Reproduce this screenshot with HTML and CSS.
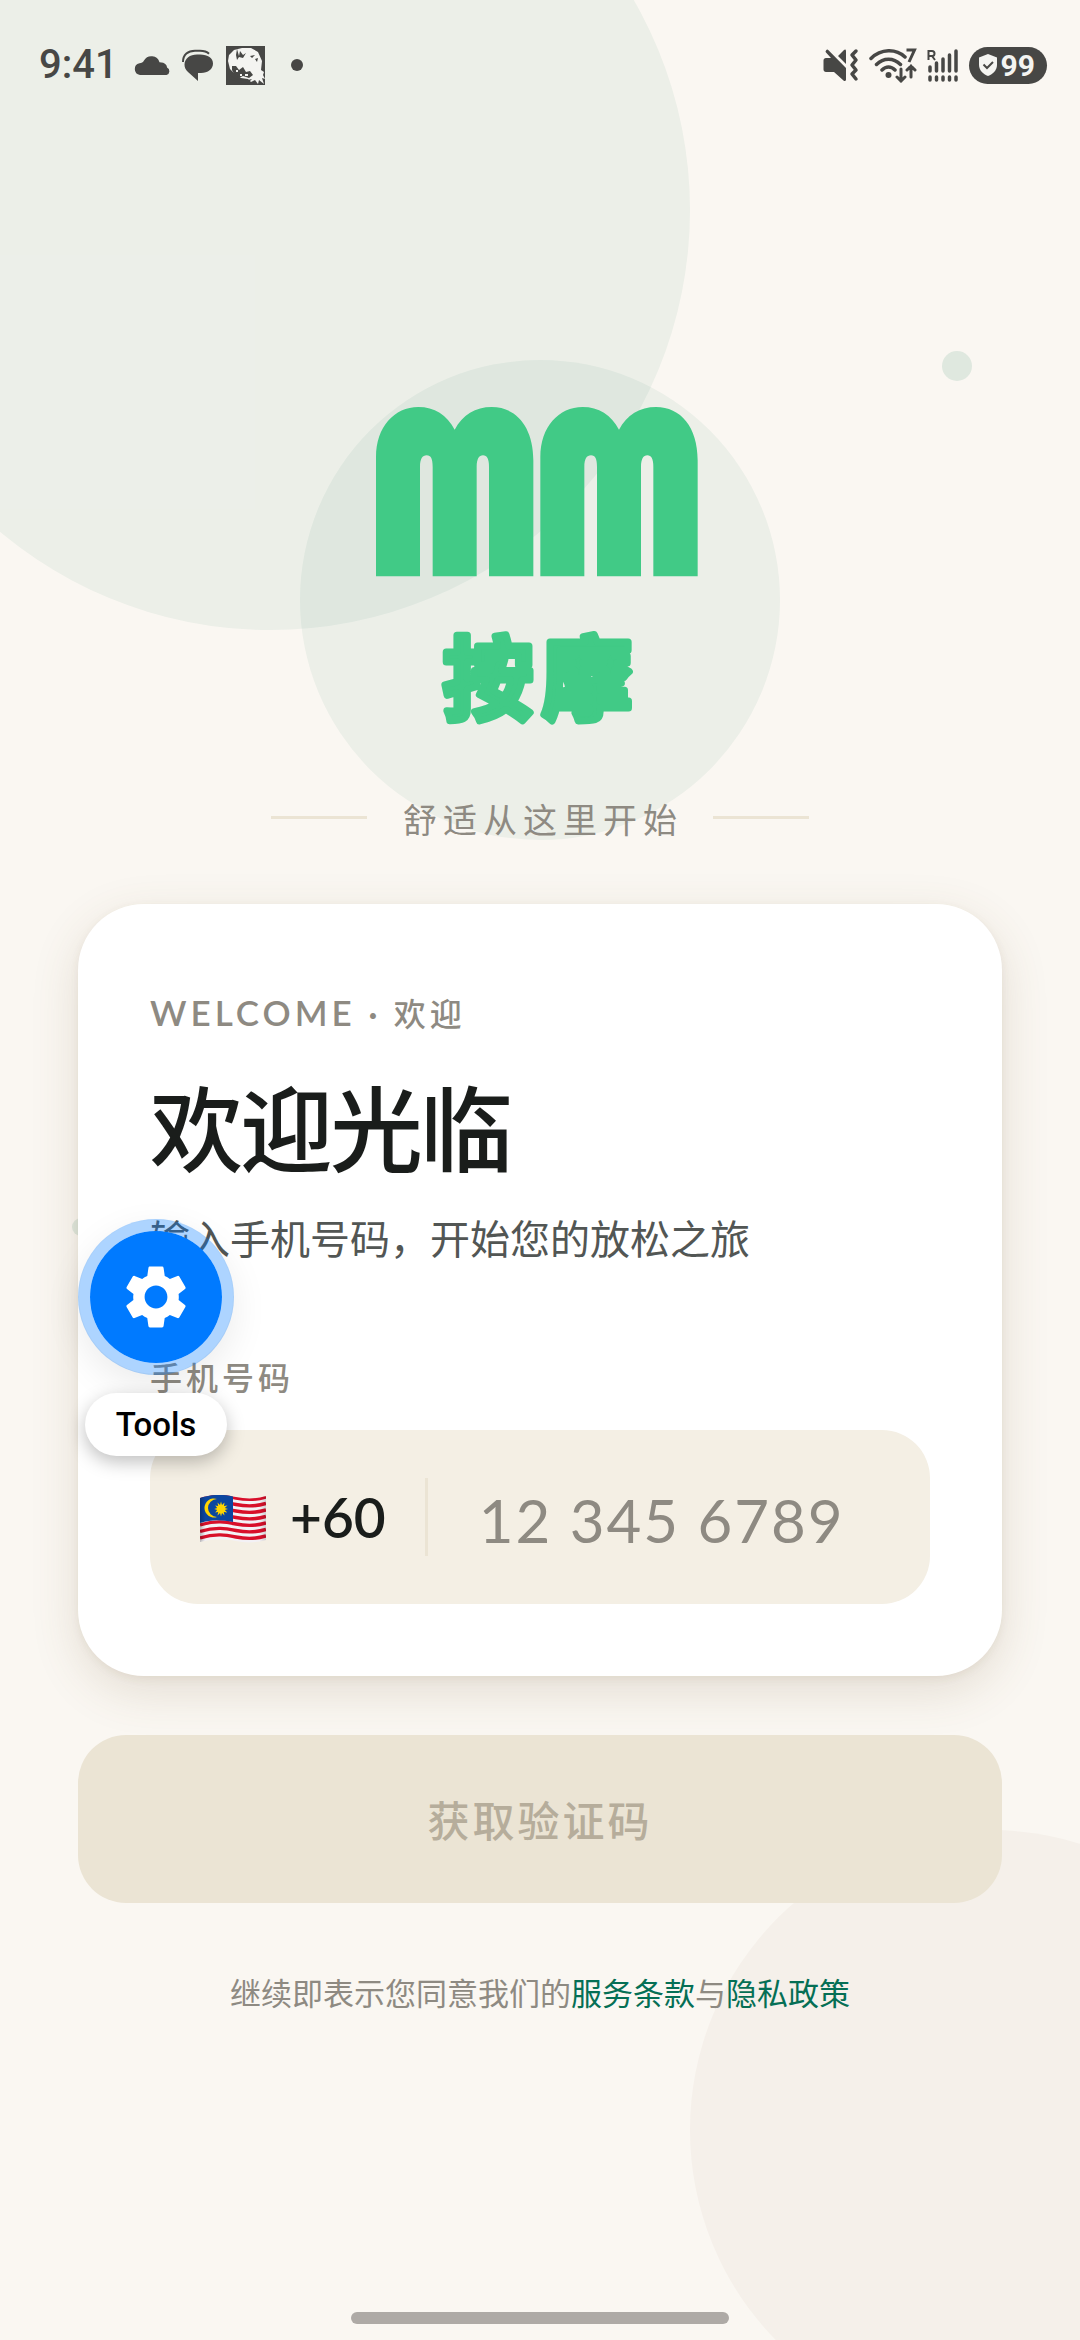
FILE: index.html
```html
<!DOCTYPE html>
<html lang="zh-CN">
<head>
  <meta charset="utf-8">
  <meta name="viewport" content="width=device-width, initial-scale=1">
  <title>MM 按摩</title>
  <link rel="stylesheet" href="styles.css">
</head>
<body>
  <div class="page">
    <div class="backdrop" aria-hidden="true">
      <span class="blob blob-top"></span>
      <span class="blob blob-logo"></span>
      <span class="blob blob-bottom"></span>
      <span class="dot dot-right"></span>
      <span class="dot dot-left"></span>
    </div>

    <header class="status">
      <div class="status-side">
        <span class="clock">9:41</span>
        <svg class="ic-cloud" width="36" height="20" viewBox="0 0 36 20"><path d="M6 20a6 6 0 0 1-.5-11.800C7.500 8 9 7.500 10 5.500a8.500 8.500 0 0 1 15.500 1.800c6 .2 7.500 3.200 7.500 5.200a4 4 0 0 1-.5 7.500z"/></svg>
        <svg class="ic-chat" width="32" height="32" viewBox="0 0 32 32"><path d="M15 5.500h3C26 5.500 31 9 31 14.500S26 24 19 24h-3v8L6 23C3.500 21 2.500 18 2.500 15.500 2.500 9.500 8 5.500 15 5.500z"/><path d="M1 13C1 5.500 6 1.800 13 1.800h5c4 0 7 1 9 3" fill="none" stroke="currentColor" stroke-width="2"/></svg>
        <svg class="ic-photo" width="39" height="39" viewBox="0 0 39 39"><path d="M0 0h39v39H0z"/><path class="light" d="M8 4l8-2 9 0 7 4 4 9-1 9 3 2-1 3 2 4-3-1 2 6-5-4-1 4-3-4-4 2-3-3-7-1-6-4-5-5-2-8 1-6z"/><path d="M7 5l3 4 1-6 2 7 1-5 3 4 3-2-3 5-4-1-2 3-1-5zM24 10l5-1-3 3zM29 13l3-1-1 4zM6 20l4 0 3 4 4-3 3 5 4-1 3 4-4 3-6-2-4 2-5-4-2-4zM2 26c4 8 14 10 24 7l-3 3-10 1-9-4z"/><path class="light" d="M10 24h2v2h-2zM14 28h2v2h-2zM19 28h3v2h-3zM12 20h2v1h-2z"/></svg>
        <svg class="ic-more" width="12" height="12" viewBox="0 0 12 12"><circle cx="6" cy="6" r="6"/></svg>
      </div>
      <div class="status-side status-right">
        <svg class="ic-mute" width="36" height="34" viewBox="0 0 36 34"><path d="M3 10h5L3 4.500a1.700 1.700 0 0 1 2.500-2.300L23 20v11.500c0 1.500-1.500 2-2.500 1L11 24H3c-1.500 0-2.500-1-2.500-2.500v-9C.5 11 1.500 10 3 10zM15 8l6-6c1-1 2-.5 2 1v13z"/><path d="M33 3l-4 4 4 5-4 5 4 5-4 4 4 5" fill="none" stroke="currentColor" stroke-width="3.500" stroke-linecap="round" stroke-linejoin="round"/></svg>
        <svg class="ic-wifi" width="48" height="36" viewBox="0 0 48 36"><g fill="none" stroke="currentColor" stroke-width="3.500" stroke-linecap="round"><path d="M2 11.500C12 1.500 27 1.500 36 10M7.500 17.500c7-7 17-7 24 0M13 23c4-4 9-4 13 0"/><path d="M32 22v12M28 30l4 4 4-4M42 30V19M38 23l4-4 4 4" stroke-width="3"/><path d="M37.500 3h8L40 15" stroke-width="3" stroke-linecap="butt"/></g><circle cx="19.500" cy="28" r="3"/></svg>
        <svg class="ic-signal" width="32" height="34" viewBox="0 0 32 34"><path d="M1.500 12V3h3.500a2.300 2.300 0 0 1 0 5H2M5 8l3 4" fill="none" stroke="currentColor" stroke-width="2"/><path d="M3 19v4M9.500 15v8M16 11v12M22.500 7v16M29 3v20M3 29v3M9.500 29v3M16 29v3M22.500 29v3M29 29v3" fill="none" stroke="currentColor" stroke-width="3.500" stroke-linecap="round"/></svg>
        <span class="battery">
          <svg width="20" height="22" viewBox="0 0 20 22"><path class="light" d="M10 0l9 3.500V11c0 5-4 9-9 11C5 20 1 16 1 11V3.500z"/><path d="M5.500 10.500l3.500 3.500 6-6" fill="none" stroke="currentColor" stroke-width="2"/></svg>
          <span>99</span>
        </span>
      </div>
    </header>

    <main class="content">
      <div class="brand">
        <svg class="mark" width="322" height="170" viewBox="0 0 966 510" role="img" aria-label="MM">
          <g id="arches">
            <path d="M0 508V150C0 60 55 0 127 0c48 0 86 24 109 68C259 24 299 0 347 0c74 0 125 60 125 160v348H339V180c0-24-6-35-18-35s-19 11-19 35v328H170V180c0-24-5-35-18-35s-20 11-20 35v328z"/>
          </g>
          <use href="#arches" x="493"/>
        </svg>
        <h1 class="brand-name">
          <svg width="240" height="160"><text x="122" y="115" text-anchor="middle">按摩</text></svg>
        </h1>
        <p class="tagline"><span>舒适从这里开始</span></p>
      </div>

      <form class="login">
        <section class="card">
          <p class="eyebrow"><span class="latin">WELCOME ·</span> 欢迎</p>
          <h2 class="title">欢迎光临</h2>
          <p class="subtitle">输入手机号码，开始您的放松之旅</p>
          <label class="field-label" for="phone">手机号码</label>
          <div class="field">
            <div class="country">
              <svg width="66" height="48" viewBox="0 0 66 48" role="img" aria-label="马来西亚">
                <defs>
                  <clipPath id="wave"><path d="M0 3C16-2 26 0 36 2s20 2 30-1v44c-11 3-20 3-30 1s-22-3-36 1z"/></clipPath>
                  <linearGradient id="shade"><stop offset="0" stop-opacity=".25"/><stop offset=".08" stop-opacity="0"/><stop offset=".9" stop-opacity="0"/><stop offset="1" stop-opacity=".15"/></linearGradient>
                </defs>
                <g clip-path="url(#wave)">
                  <path fill="#f3f1f5" d="M0-2h66v52H0z"/>
                  <path d="M0 4C16-1 26 1 36 3s20 2 30-1M0 10.500C16 5.500 26 7.500 36 9.500s20 2 30-1M0 17C16 12 26 14 36 16s20 2 30-1M0 23.500c16-5 26-3 36-1s20 2 30-1M0 30c16-5 26-3 36-1s20 2 30-1M0 36.500c16-5 26-3 36-1s20 2 30-1M0 43c16-5 26-3 36-1s20 2 30-1" fill="none" stroke="#d80f2a" stroke-width="3.400"/>
                  <path fill="#0b46a0" d="M0-2h33v29C22 25 12 24 0 28z"/>
                  <path fill="#ffd500" d="M17 4a9.500 9.500 0 1 0 0 18 8.500 8.500 0 1 1 0-18z"/>
                  <path fill="#ffd500" d="M21 6.500l1 3.500 2.500-2.500-.5 3.500 3.500-.5-2.700 2.500 3.200 1-3.200 1 2.500 2.500-3.500-.5.700 3.500-2.500-2.500-1 3.500-1-3.500-2.500 2.500.7-3.500-3 .5 2-2.500-3-1 3-1-2-2.500 3 .5-.7-3.500 2.500 2.500z"/>
                  <path fill="url(#shade)" d="M0-2h66v52H0z"/>
                </g>
              </svg>
              <span class="code">+60</span>
            </div>
            <input class="phone" id="phone" type="tel" placeholder="12 345 6789">
          </div>
        </section>
        <button class="submit" type="submit" disabled>获取验证码</button>
      </form>

      <p class="terms">继续即表示您同意我们的<a href="#terms">服务条款</a>与<a href="#privacy">隐私政策</a></p>
    </main>

    <div class="tools">
      <button class="tools-button" type="button" aria-labelledby="tools-label">
        <svg width="76" height="76" viewBox="0 0 24 24"><path d="M19.140 12.940c.04-.3.060-.61.060-.94 0-.32-.02-.64-.07-.94l2.030-1.580a.49.49 0 0 0 .12-.61l-1.920-3.320a.488.488 0 0 0-.59-.22l-2.390.96c-.5-.38-1.030-.7-1.620-.94l-.36-2.540a.484.484 0 0 0-.48-.41h-3.840c-.24 0-.43.170-.47.410l-.36 2.540c-.59.240-1.130.570-1.620.940l-2.390-.96c-.22-.08-.47 0-.59.220L2.740 8.870c-.12.210-.08.470.120.610l2.030 1.580c-.05.300-.09.630-.09.940s.02.640.070.940l-2.030 1.580a.49.49 0 0 0-.12.610l1.920 3.320c.12.220.370.290.590.220l2.390-.96c.5.380 1.030.700 1.620.940l.36 2.540c.05.240.240.410.480.410h3.840c.24 0 .44-.17.470-.41l.36-2.540c.59-.24 1.130-.56 1.620-.94l2.390.96c.22.080.470 0 .59-.22l1.920-3.320c.12-.22.070-.47-.12-.61zM12 15.600A3.610 3.610 0 0 1 8.400 12c0-1.980 1.620-3.600 3.600-3.600s3.600 1.620 3.600 3.600-1.620 3.600-3.600 3.600z"/></svg>
      </button>
      <span class="tools-label" id="tools-label">Tools</span>
    </div>

    <span class="home-bar" aria-hidden="true"></span>
  </div>
</body>
</html>
```
FILE: styles.css
```css
:root {
  --ink: #1a1d1b;
  --muted: #8e8a82;
  --green: #056f55;
  --mint: #41ca86;
  --sand: #ebe4d4;
  --status: #474745;
  --cjk: "Noto Sans CJK SC", sans-serif;
}

* {
  box-sizing: border-box;
}

body {
  margin: 0;
  background: #faf7f2;
  color: var(--ink);
  font-family: Lato, var(--cjk);
}

h1,
h2,
p {
  margin: 0;
}

svg {
  display: block;
  flex: none;
  fill: currentColor;
}

.page {
  position: relative;
  min-height: 100vh;
  overflow: hidden;
}

/* decorative shapes behind everything */
.backdrop {
  position: absolute;
  inset: 0;
}

.blob,
.dot {
  position: absolute;
  border-radius: 50%;
}

.blob {
  background: rgba(10, 111, 85, 0.06);
}

.blob-top {
  top: -210px;
  left: -150px;
  width: 840px;
  height: 840px;
}

.blob-logo {
  top: 360px;
  left: calc(50% - 240px);
  width: 480px;
  height: 480px;
}

.blob-bottom {
  right: -210px;
  bottom: -90px;
  width: 600px;
  height: 600px;
  background: #f5f0ea;
}

.dot {
  background: #dfe8df;
}

.dot-right {
  top: 351px;
  right: 108px;
  width: 30px;
  height: 30px;
}

.dot-left {
  top: 1218px;
  left: 72px;
  width: 18px;
  height: 18px;
}

/* status bar */
.status {
  position: relative;
  display: flex;
  align-items: center;
  justify-content: space-between;
  height: 130px;
  padding: 0 33px 0 39px;
  color: var(--status);
}

.status-side {
  display: flex;
  align-items: center;
  gap: 12px;
}

.status-right {
  gap: 10px;
}

.clock {
  font: 500 40px/48px Roboto, sans-serif;
  margin-right: 4px;
}

.ic-more {
  margin-left: 14px;
}

.light {
  fill: #f4f4f1;
}

.battery {
  display: flex;
  align-items: center;
  gap: 3px;
  height: 37px;
  padding: 0 12px 0 9px;
  border-radius: 19px;
  background: var(--status);
  font: 700 30px/37px Roboto, sans-serif;
}

.battery span {
  color: #f4f4f1;
}

/* content column */
.content {
  position: relative;
  padding: 277px 78px 66px;
}

.brand {
  display: flex;
  flex-direction: column;
  align-items: center;
}

.mark {
  margin-right: 6px;
  color: var(--mint);
}

.brand-name {
  margin-top: 20px;
  color: var(--mint);
  font: 700 90px/120px var(--cjk);
  letter-spacing: 9px;
}

.brand-name text {
  stroke: currentColor;
  stroke-width: 7px;
  stroke-linejoin: round;
}

.tagline {
  display: flex;
  align-items: center;
  gap: 33px;
  margin-top: 33px;
  color: var(--muted);
  font-size: 34px;
  line-height: 48px;
  letter-spacing: 6px;
}

.tagline span {
  padding: 6px 0 0 3px;
  margin-right: -3px;
}

.tagline::before,
.tagline::after {
  content: "";
  width: 96px;
  height: 3px;
  background: var(--sand);
}

.card {
  margin-top: 60px;
  padding: 81px 72px 72px;
  border-radius: 66px;
  background: #fff;
  box-shadow: 0 15px 48px rgba(110, 85, 50, 0.16), 0 3px 9px rgba(110, 85, 50, 0.08);
}

.eyebrow,
.field-label {
  color: var(--muted);
  font-size: 32px;
  font-weight: 500;
  letter-spacing: 4px;
}

.eyebrow {
  line-height: 54px;
}

.latin {
  font-size: 35px;
  font-weight: 600;
}

.title {
  margin-top: 24px;
  font: 500 93px/120px var(--cjk);
  letter-spacing: -3px;
}

.subtitle {
  margin-top: 24px;
  color: #525654;
  font-size: 40px;
  line-height: 60px;
}

.field-label {
  display: block;
  margin-top: 85px;
  line-height: 48px;
}

.field {
  display: flex;
  align-items: center;
  height: 174px;
  margin-top: 28px;
  padding: 0 48px;
  border-radius: 48px;
  background: #f4efe4;
}

.country {
  display: flex;
  align-items: center;
  gap: 24px;
  height: 78px;
  padding-right: 39px;
  border-right: 3px solid var(--sand);
}

.country svg {
  margin: 4px 0 0 2px;
}

.code {
  font-size: 55px;
  font-weight: 600;
}

.phone {
  flex: 1;
  min-width: 0;
  padding: 6px 0 0 51px;
  border: 0;
  outline: 0;
  background: none;
  color: var(--ink);
  font: 400 60px/78px Lato, sans-serif;
  letter-spacing: 2px;
}

.phone::placeholder {
  color: var(--muted);
  opacity: 1;
}

.submit {
  display: block;
  width: 100%;
  height: 168px;
  margin-top: 59px;
  border: 0;
  border-radius: 48px;
  background: var(--sand);
  color: #b6ad9b;
  font: 500 42px/60px var(--cjk);
  letter-spacing: 3px;
}

.terms {
  margin-top: 66px;
  color: var(--muted);
  font-size: 31px;
  line-height: 48px;
  text-align: center;
}

.terms a {
  color: var(--green);
  text-decoration: none;
}

/* floating developer tools */
.tools {
  position: absolute;
  top: 1219px;
  left: 78px;
  display: flex;
  flex-direction: column;
  align-items: center;
  gap: 18px;
  width: 156px;
}

.tools-button {
  display: grid;
  place-items: center;
  width: 156px;
  height: 156px;
  padding: 0;
  border: 12px solid rgba(0, 122, 255, 0.32);
  border-radius: 50%;
  background: #007aff;
  background-clip: padding-box;
  color: #fff;
  box-shadow: 0 12px 36px rgba(0, 0, 0, 0.08);
}

.tools-label {
  padding: 0 31px;
  border-radius: 32px;
  background: #fff;
  color: #000;
  font: 500 33px/63px Roboto, sans-serif;
  box-shadow: 0 6px 18px rgba(0, 0, 0, 0.25);
}

.home-bar {
  position: absolute;
  bottom: 16px;
  left: 50%;
  width: 35%;
  height: 12px;
  border-radius: 6px;
  background: #aeaaa6;
  transform: translateX(-50%);
}
```
